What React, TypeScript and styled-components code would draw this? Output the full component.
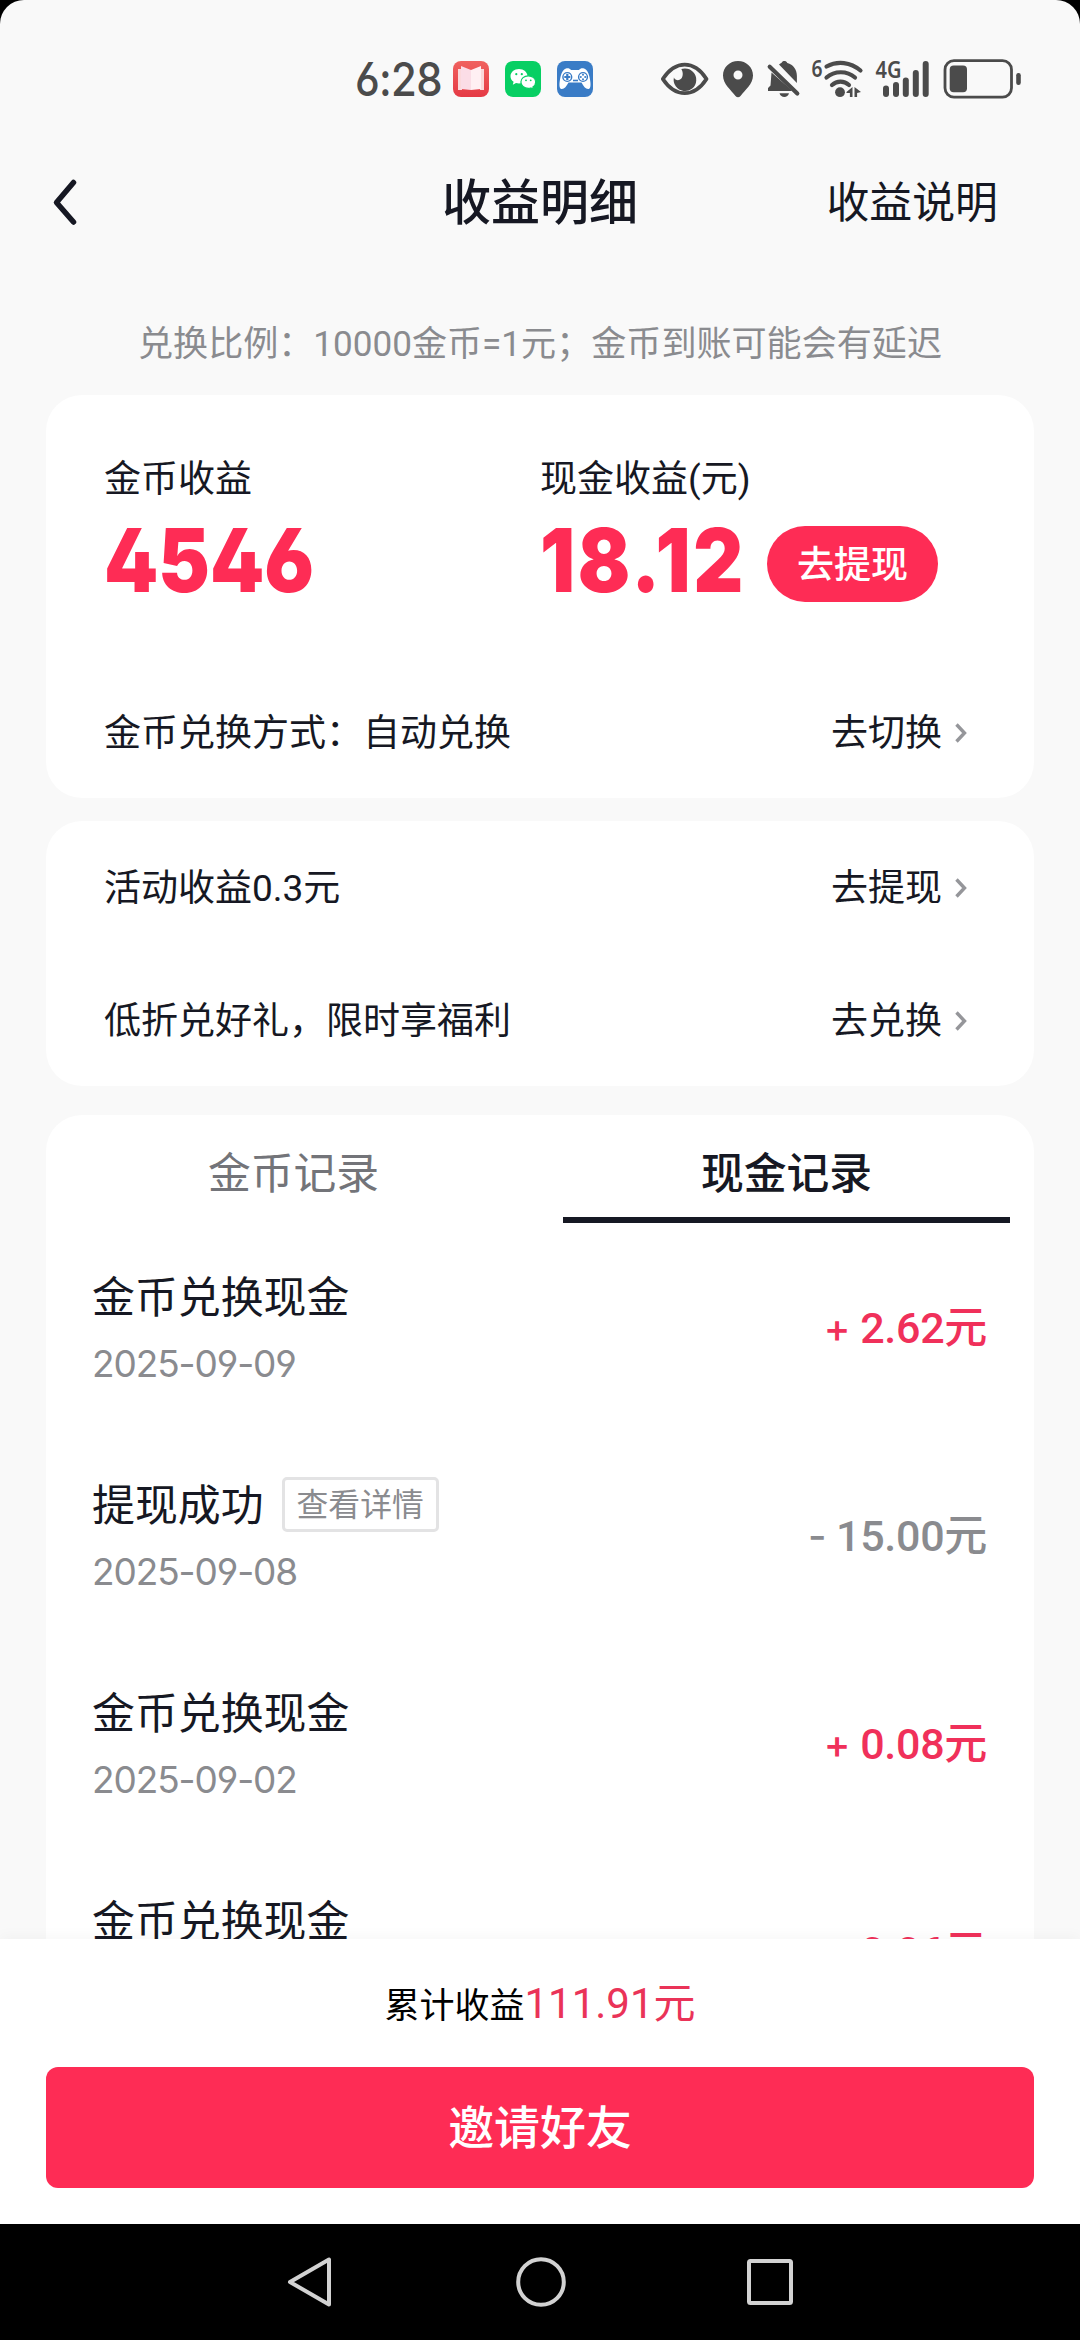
import React from "react";
import styled, { createGlobalStyle } from "styled-components";

const CJK = `Roboto, "Noto Sans CJK SC", sans-serif`;
const NUM = `Inter, "Noto Sans CJK SC", sans-serif`;
const RED = "#fe2c55";
const INK = "#161823";

const Global = createGlobalStyle`
  * { box-sizing: border-box; }
  html, body { margin: 0; padding: 0; background: #000; }
  body { font-family: ${CJK}; color: ${INK}; overflow: hidden; }
`;

const Screen = styled.div`
  width: 1080px;
  height: 2340px;
  display: flex;
  flex-direction: column;
  background: #000;
  overflow: hidden;
`;

const Page = styled.div`
  flex: 1;
  min-height: 0;
  display: flex;
  flex-direction: column;
  background: #f9f9f9;
  border-radius: 24px 24px 0 0;
  overflow: hidden;
`;

const StatusBar = styled.div`
  flex: none;
  height: 120px;
  padding: 38px 56px 0 355px;
  display: flex;
  align-items: center;
  color: #4b4b4b;
`;

const Clock = styled.span`
  width: 98px;
  font: 500 46.5px/46px ${NUM};
  font-feature-settings: "ss01";
  letter-spacing: -0.8px;
  white-space: nowrap;
  transform: scaleX(0.9);
  transform-origin: 0 50%;
`;

const AppIcons = styled.div`
  display: flex;
  gap: 16px;
`;

const SystemIcons = styled.svg`
  margin-left: auto;
  display: block;
  overflow: visible;
`;

const NavBar = styled.header`
  flex: none;
  height: 163px;
  padding: 0 50px;
  display: grid;
  grid-template-columns: minmax(0, 1fr) auto minmax(0, 1fr);
  align-items: center;
`;

const Title = styled.h1`
  margin: 0;
  padding-top: 5px;
  font-size: 49px;
  line-height: 60px;
  font-weight: 500;
`;

const NavLink = styled.span`
  justify-self: end;
  margin-right: 32px;
  padding-top: 3px;
  font-size: 42.9px;
  line-height: 60px;
`;

const Notice = styled.p`
  flex: none;
  margin: 0;
  height: 112px;
  padding-top: 36px;
  text-align: center;
  font-size: 35.1px;
  line-height: 50px;
  color: #8a8b8f;
`;

const Card = styled.section<{ $h: number; $gap: number }>`
  flex: none;
  height: ${(p) => p.$h}px;
  margin: 0 46px ${(p) => p.$gap}px;
  background: #fff;
  border-radius: 36px;
`;

const Summary = styled.div`
  display: grid;
  grid-template-columns: 436px 1fr;
  height: 271px;
  padding: 60px 0 0 58px;
`;

const SummaryLabel = styled.div`
  font-size: 37px;
  line-height: 50px;
  white-space: nowrap;
`;

const SummaryValue = styled.div`
  display: flex;
  align-items: center;
  height: 76px;
  margin-top: 21px;
  gap: 23px;
`;

const BigNumber = styled.span<{ $w: number; $track?: number }>`
  width: ${(p) => p.$w}px;
  padding-bottom: 8px;
  font: 900 88px/76px ${NUM};
  font-feature-settings: "ss01";
  letter-spacing: ${(p) => p.$track ?? 0}px;
  color: ${RED};
  white-space: nowrap;
  transform: scaleX(0.88);
  transform-origin: 0 50%;
`;

const Pill = styled.button`
  width: 171px;
  height: 76px;
  border: 0;
  border-radius: 38px;
  padding: 3px 0 0;
  background: ${RED};
  color: #fff;
  font: 500 37px/73px ${CJK};
`;

const Row = styled.div`
  height: 133px;
  padding: 0 67px 0 58px;
  display: flex;
  align-items: center;
  font-size: 37px;
  line-height: 50px;
`;

const RowText = styled.span`
  padding-top: 3px;
`;

const RowAction = styled.span`
  margin-left: auto;
  display: flex;
  align-items: center;
  gap: 13px;
`;

const Tabs = styled.div`
  display: flex;
  gap: 46px;
  padding: 0 24px;
  height: 108px;
`;

const Tab = styled.div<{ $on?: boolean }>`
  flex: 1;
  text-align: center;
  font-size: 42.8px;
  line-height: 118px;
  height: 108px;
  font-weight: ${(p) => (p.$on ? 500 : 400)};
  color: ${(p) => (p.$on ? INK : "#737479")};
  border-bottom: 6px solid ${(p) => (p.$on ? INK : "transparent")};
`;

const Record = styled.div`
  height: 208px;
  padding: 0 47px 0 46px;
  display: flex;
  align-items: center;
  justify-content: space-between;
`;

const RecordTitle = styled.div`
  display: flex;
  align-items: center;
  gap: 18px;
  height: 60px;
  font-size: 42.9px;
  line-height: 60px;
`;

const Badge = styled.span`
  height: 55px;
  margin-bottom: 2px;
  padding: 0 12px;
  border: 3px solid #e3e3e4;
  border-radius: 5px;
  font-size: 31.8px;
  line-height: 51px;
  color: #8a8b8f;
`;

const RecordDate = styled.div`
  margin-top: 11px;
  height: 50px;
  font: 400 37px/50px ${NUM};
  font-feature-settings: "ss01";
  letter-spacing: -1.1px;
  color: #8a8b8f;
`;

const Amount = styled.div<{ $out?: boolean }>`
  display: flex;
  gap: 10px;
  padding-bottom: 1px;
  font-size: 43px;
  line-height: 60px;
  font-weight: 500;
  letter-spacing: -0.3px;
  color: ${(p) => (p.$out ? "#8a8b8f" : "#f0305a")};
`;

const Sign = styled.span`
  font-family: ${NUM};
  font-size: 40px;
`;

const Records = styled.div`
  padding-top: 1px;
`;

const Footer = styled.footer`
  flex: none;
  position: relative;
  height: 285px;
  margin-top: auto;
  padding: 35px 46px 0;
  background: #fff;
  box-shadow: 0 -2px 14px rgba(0, 0, 0, 0.04);
`;

const Scroll = styled.main`
  flex: 1;
  min-height: 0;
  overflow: hidden;
`;

const Total = styled.div`
  height: 93px;
  text-align: center;
  font-size: 35px;
  line-height: 60px;
  color: #000;
`;

const TotalValue = styled.span`
  font-size: 42px;
  color: #ea3358;
`;

const Invite = styled.button`
  display: block;
  width: 100%;
  height: 121px;
  padding: 1px 0 0;
  border: 0;
  border-radius: 12px;
  background: ${RED};
  color: #fff;
  font: 500 45.9px/120px ${CJK};
`;

const SystemNav = styled.nav`
  flex: none;
  height: 116px;
  padding: 0 287px 0 286px;
  display: flex;
  align-items: center;
  justify-content: space-between;
`;

const Chevron = () => (
  <svg width="12" height="20" viewBox="0 0 12 20" fill="none">
    <path d="M1.5 1.5 9.500 10 1.5 18.5" stroke="#95969a" strokeWidth="3.400" />
  </svg>
);

const BookIcon = () => (
  <svg width="36" height="36" viewBox="0 0 36 36">
    <defs>
      <linearGradient id="book" x1="0" y1="0" x2="0" y2="1">
        <stop offset="0" stopColor="#f0625f" />
        <stop offset="1" stopColor="#e53a45" />
      </linearGradient>
    </defs>
    <rect width="36" height="36" rx="8" fill="url(#book)" />
    <path d="M5 8h4v21H5zM27 8h4v21h-4z" fill="#fbd9dc" />
    <path d="M8 5l10 4v20l-10-1z" fill="#fbdde6" />
    <path d="M28 5l-10 4v20l10-1z" fill="#fff0f3" />
  </svg>
);

const ChatIcon = () => (
  <svg width="36" height="36" viewBox="0 0 36 36">
    <rect width="36" height="36" rx="8" fill="#07cf63" />
    <path d="M14 8c-4.800 0-8.500 3.200-8.500 7.200 0 2.300 1.200 4.300 3.100 5.600l-.8 2.900 3.200-1.700c1 .3 2 .4 3 .4 4.700 0 8.500-3.200 8.500-7.200S18.700 8 14 8z" fill="#fff" />
    <path d="M23.300 14.800c-4.200 0-7.400 2.800-7.400 6.200s3.200 6.300 7.400 6.300c.9 0 1.700-.1 2.500-.3l2.700 1.400-.6-2.300c1.800-1.200 2.800-3 2.800-5.100 0-3.400-3.200-6.200-7.400-6.200z" fill="#fff" stroke="#07cf63" strokeWidth="1.200" />
    <g fill="#07cf63">
      <circle cx="11.300" cy="13.200" r="1.100" />
      <circle cx="16.800" cy="13.200" r="1.100" />
      <circle cx="21" cy="19.300" r="0.900" />
      <circle cx="25.700" cy="19.300" r="0.900" />
    </g>
  </svg>
);

const GamepadIcon = () => (
  <svg width="36" height="36" viewBox="0 0 36 36">
    <rect width="36" height="36" rx="8" fill="#3a7cc6" />
    <path d="M9 7.500c2-.5 4 0 5 1.500h8c1-1.500 3-2 5-1.500 3 .8 5 5 6 11 .8 4.500 1 9-1.500 9.500-2.500.4-5-2.500-7-6.500H11.500c-2 4-4.500 6.900-7 6.500C2 27.500 2.200 23 3 18.500 4 12.500 6 8.300 9 7.500z" fill="#fff" />
    <g stroke="#3a7cc6" fill="none" strokeWidth="1.400">
      <circle cx="10.300" cy="16" r="4.400" />
      <circle cx="26" cy="16" r="4.400" />
      <path d="M10.300 13v6M7.300 16h6" strokeWidth="2.200" />
      <path d="M16 19.500h5" strokeWidth="1.600" />
    </g>
    <g fill="#3a7cc6">
      <circle cx="26" cy="13.800" r="1" />
      <circle cx="26" cy="18.200" r="1" />
      <circle cx="23.800" cy="16" r="1" />
      <circle cx="28.200" cy="16" r="1" />
    </g>
  </svg>
);

/* One drawing, 364 wide: eye, pin, muted bell, wifi, cellular and battery. */
const StatusGlyphs = () => (
  <SystemIcons width="364" height="44" viewBox="0 0 364 44" fill="#4b4b4b">
    <path d="M2.800 22C9.500 12 16.500 7.700 24.700 7.700S40 12 46.500 22C40 32 33 36.200 24.700 36.200S9.500 32 2.800 22z" fill="none" stroke="#4b4b4b" strokeWidth="3.800" strokeLinejoin="round" />
    <path d="M24.700 11.500a11.300 11.300 0 1 1-10.800 9c1.300 3 5 3.600 7.200 1.300 2.600-2.800 1.700-7.800.2-9.800 1-.3 2.200-.5 3.400-.5z" />
    <path fillRule="evenodd" d="M78 4c-8.300 0-15 6.300-15 14.500 0 8.500 8 14.500 12.500 20.500 1.500 1.800 3.500 1.800 5 0C85 33 93 27 93 18.500 93 10.300 86.300 4 78 4zm0 9.500a4.500 4.500 0 1 1 0 9 4.500 4.500 0 0 1 0-9z" />
    <path d="M119 7.500c1.500-1.200 2.500-1.500 2.500-1.500 1-2.400 4.500-2.600 5.800 0 6 1.500 9.600 6.500 9.600 13v7z" />
    <path d="M111.500 15.500 131.500 33v1H108v-3l2.500-2.500z" />
    <path d="M109.700 9.700 137.300 36.500" stroke="#4b4b4b" strokeWidth="4.200" strokeLinecap="round" />
    <path d="M119.500 36.200h9.500c-.8 2.600-2.500 3.800-4.700 3.800s-4-1.200-4.800-3.800z" />
    <text x="151.500" y="20" fontFamily="Noto Sans" fontSize="23" fontWeight="600" textLength="11" lengthAdjust="spacingAndGlyphs">6</text>
    <g fill="none" stroke="#4b4b4b" strokeWidth="4.200" strokeLinecap="round">
      <path d="M166.500 9.500c11-6 24-4.500 34 4" />
      <path d="M166.500 20.500c8-7 20.500-7 28.500 0" />
      <path d="M172 28c5-4.500 12-4.500 17 0" />
    </g>
    <circle cx="180" cy="35.200" r="4.900" />
    <path d="M186.500 35l6-5v10h-2.600v-4h-3.400zM194.500 30l6.500 5-3.900 1v4h-2.600z" />
    <text x="215.500" y="21" fontFamily="Noto Sans" fontSize="23" fontWeight="600" textLength="26" lengthAdjust="spacingAndGlyphs">4G</text>
    <rect x="223" y="28.500" width="6" height="11.500" rx="3" />
    <rect x="233" y="25" width="6" height="15" rx="3" />
    <rect x="242.800" y="20.500" width="6" height="19.500" rx="3" />
    <rect x="252.800" y="13" width="6" height="27" rx="3" />
    <rect x="262.700" y="4" width="6" height="36" rx="3" />
    <rect x="285" y="3.700" width="66.500" height="36.400" rx="9" fill="none" stroke="#4b4b4b" strokeWidth="2.800" />
    <rect x="289.700" y="8.500" width="17.300" height="26.800" rx="4" />
    <rect x="356.200" y="16" width="4.600" height="12" rx="2.200" />
  </SystemIcons>
);

type Entry = { title: string; date: string; sign: string; amount: string; out?: boolean; badge?: string };

const entries: Entry[] = [
  { title: "金币兑换现金", date: "2025-09-09", sign: "+", amount: "2.62元" },
  { title: "提现成功", date: "2025-09-08", sign: "-", amount: "15.00元", out: true, badge: "查看详情" },
  { title: "金币兑换现金", date: "2025-09-02", sign: "+", amount: "0.08元" },
  { title: "金币兑换现金", date: "2025-09-01", sign: "+", amount: "0.06元" },
];

export default function App() {
  return (
    <Screen>
      <Global />
      <Page>
        <StatusBar>
          <Clock>6:28</Clock>
          <AppIcons>
            <BookIcon />
            <ChatIcon />
            <GamepadIcon />
          </AppIcons>
          <StatusGlyphs />
        </StatusBar>
        <NavBar>
          <svg width="28" height="48" viewBox="0 0 28 48" fill="none">
            <path d="M23.500 4.500 6.500 24.500l17 19.500" stroke={INK} strokeWidth="5.500" strokeLinecap="round" strokeLinejoin="round" />
          </svg>
          <Title>收益明细</Title>
          <NavLink>收益说明</NavLink>
        </NavBar>
        <Scroll>
          <Notice>兑换比例：10000金币=1元；金币到账可能会有延迟</Notice>
          <Card $h={403} $gap={23}>
            <Summary>
              <div>
                <SummaryLabel>金币收益</SummaryLabel>
                <SummaryValue>
                  <BigNumber $w={210}>4546</BigNumber>
                </SummaryValue>
              </div>
              <div>
                <SummaryLabel>现金收益(元)</SummaryLabel>
                <SummaryValue>
                  <BigNumber $w={204} $track={3}>18.12</BigNumber>
                  <Pill>去提现</Pill>
                </SummaryValue>
              </div>
            </Summary>
            <Row>
              <RowText>金币兑换方式：自动兑换</RowText>
              <RowAction><RowText>去切换</RowText><Chevron /></RowAction>
            </Row>
          </Card>
          <Card $h={265} $gap={29}>
            <Row>
              <RowText>活动收益0.3元</RowText>
              <RowAction><RowText>去提现</RowText><Chevron /></RowAction>
            </Row>
            <Row>
              <RowText>低折兑好礼，限时享福利</RowText>
              <RowAction><RowText>去兑换</RowText><Chevron /></RowAction>
            </Row>
          </Card>
          <Card $h={1000} $gap={0}>
            <Tabs>
              <Tab>金币记录</Tab>
              <Tab $on>现金记录</Tab>
            </Tabs>
            <Records>
              {entries.map((e) => (
                <Record key={e.date}>
                  <div>
                    <RecordTitle>
                      {e.title}
                      {e.badge && <Badge>{e.badge}</Badge>}
                    </RecordTitle>
                    <RecordDate>{e.date}</RecordDate>
                  </div>
                  <Amount $out={e.out}>
                    <Sign>{e.sign}</Sign>
                    <span>{e.amount}</span>
                  </Amount>
                </Record>
              ))}
            </Records>
          </Card>
        </Scroll>
        <Footer>
          <Total>
            累计收益<TotalValue>111.91元</TotalValue>
          </Total>
          <Invite>邀请好友</Invite>
        </Footer>
      </Page>
      <SystemNav>
        <svg width="48" height="54" viewBox="0 0 48 54" fill="none">
          <path d="M43 4.500v45L4 27z" stroke="#d2d2d2" strokeWidth="4" strokeLinejoin="round" />
        </svg>
        <svg width="50" height="50" viewBox="0 0 50 50" fill="none">
          <circle cx="25" cy="25" r="22.800" stroke="#d2d2d2" strokeWidth="4" />
        </svg>
        <svg width="46" height="46" viewBox="0 0 46 46" fill="none">
          <rect x="2" y="2" width="42" height="42" rx="1.500" stroke="#d2d2d2" strokeWidth="4" />
        </svg>
      </SystemNav>
    </Screen>
  );
}
